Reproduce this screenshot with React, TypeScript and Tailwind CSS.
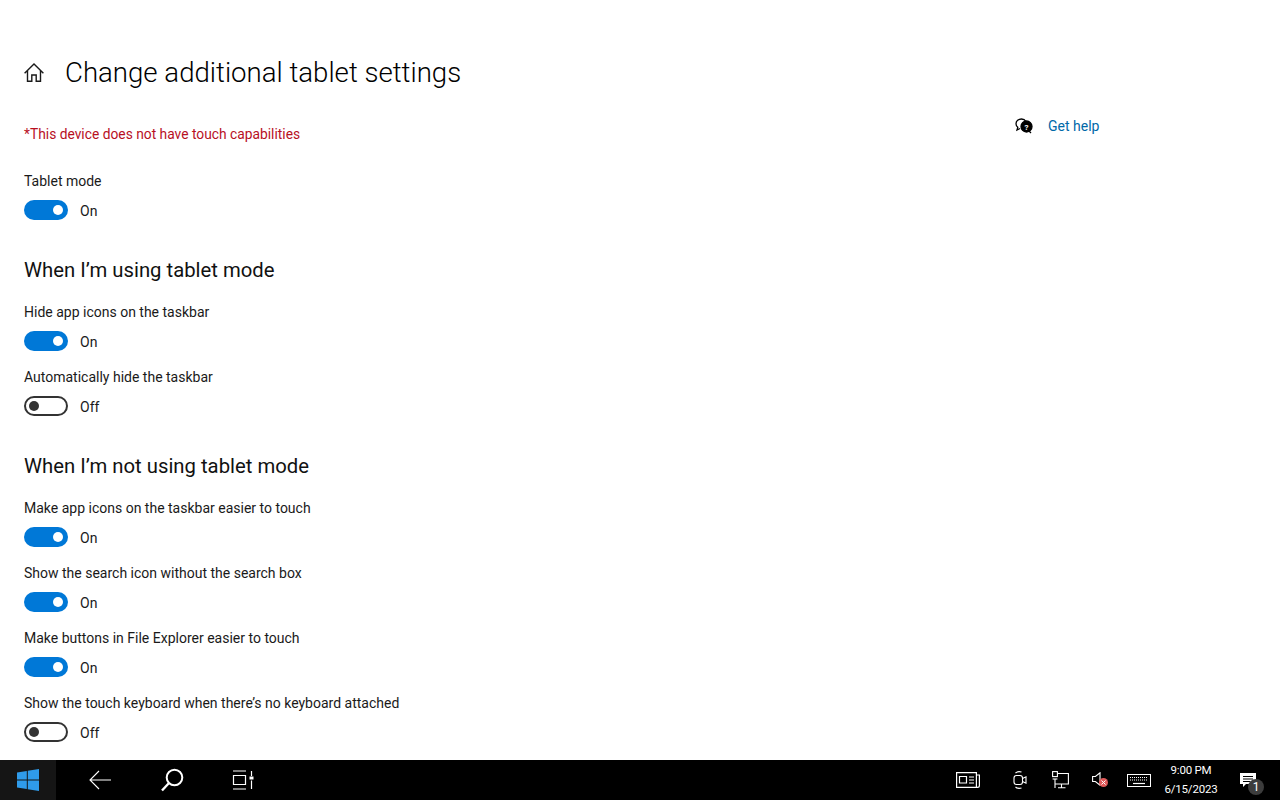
import React from 'react';

function Toggle({ on, label }: { on: boolean; label: string }) {
  return (
    <div className="flex items-center h-5 mt-[9px]">
      {on ? (
        <div className="w-11 h-5 rounded-full bg-[#0078d7] flex items-center justify-end pr-[5px]">
          <div className="w-[10px] h-[10px] rounded-full bg-white" />
        </div>
      ) : (
        <div className="w-11 h-5 rounded-full border-2 border-[#333333] flex items-center pl-[3px]">
          <div className="w-[10px] h-[10px] rounded-full bg-[#333333]" />
        </div>
      )}
      <span className="ml-3 text-[14px] text-[#1a1a1a] translate-y-[1px]">{label}</span>
    </div>
  );
}

function Setting({ title, on, className }: { title: string; on: boolean; className?: string }) {
  return (
    <div className={className}>
      <div className="h-5 leading-5 text-[14px] text-[#1a1a1a]">{title}</div>
      <Toggle on={on} label={on ? 'On' : 'Off'} />
    </div>
  );
}

function Heading({ children, className }: { children: React.ReactNode; className?: string }) {
  return <h2 className={`h-7 leading-7 text-[20.3px] text-[#111111] ${className}`}>{children}</h2>;
}

function HomeIcon() {
  return (
    <svg width="20" height="19" viewBox="0 0 20 19" fill="none" stroke="#1a1a1a" strokeWidth="1.4">
      <path d="M.6 10.200 10 1l9.400 9.200M3.500 7.500v10.800h4.300v-6.300h4.400v6.300h4.300V7.500" />
    </svg>
  );
}

function WindowsLogo() {
  return (
    <svg width="22" height="22" viewBox="0 0 22 22" fill="#2f9bea">
      <path d="M0 3.400 9.800 2v8.500H0zM10.800 1.800 22 0v10.500H10.800zM0 11.500h9.800V20L0 18.600zM10.800 11.500H22V22l-11.200-1.800z" />
    </svg>
  );
}

function BackIcon() {
  return (
    <svg width="22" height="20" viewBox="0 0 22 20" fill="none" stroke="white" strokeWidth="1.1">
      <path d="M22 10H1M10 1l-9 9 9 9" />
    </svg>
  );
}

function SearchIcon() {
  return (
    <svg width="24" height="24" viewBox="0 0 24 24" fill="none" stroke="white" strokeWidth="2">
      <circle cx="14.500" cy="9.500" r="7.800" />
      <path d="M9 15 2 22.500" strokeWidth="2.400" />
    </svg>
  );
}

function TaskViewIcon() {
  return (
    <svg width="22" height="20" viewBox="0 0 22 20" fill="none" stroke="white" strokeWidth="1.2">
      <path d="M1 1h13M1 19h13M1.500 5.500h12v9h-12z" />
      <path d="M19.500 1v5M19.500 10.500V19" />
      <rect x="17.500" y="6.500" width="4" height="3" fill="white" stroke="none" />
    </svg>
  );
}

function NewsIcon() {
  return (
    <svg width="24" height="16" viewBox="0 0 24 16" fill="none" stroke="white" strokeWidth="1.2">
      <path d="M.6.600h19.800v14.800H.6zM20.400 3h3v10.500a1.900 1.900 0 0 1-1.900 1.900h-1.100" />
      <path d="M3.500 4.500h7v6.500h-7zM13 5h5M13 8h5M13 11h5" />
    </svg>
  );
}

function MeetIcon() {
  return (
    <svg width="14" height="20" viewBox="0 0 14 20" fill="none" stroke="white" strokeWidth="1.1">
      <rect x="1" y="5.500" width="8.500" height="9" rx="2.500" />
      <path d="M9.500 8.500 13 6.800v6.400l-3.500-1.700M2.500 3Q5 .8 8.500 2M2.500 17q2.500 2.200 6 1" />
    </svg>
  );
}

function NetworkIcon() {
  return (
    <svg width="17" height="18" viewBox="0 0 17 18" fill="none" stroke="white" strokeWidth="1.1">
      <path d="M5 2.500h11.400v10.500H3M9.500 13v3.500M6 16.800h7.500M3 8v9" />
      <rect x=".6" y=".6" width="4.800" height="5" fill="black" />
      <path d="M.6 8h4.800" />
    </svg>
  );
}

function VolumeMutedIcon() {
  return (
    <div className="relative w-[16px] h-[16px]">
      <svg width="9" height="14" viewBox="0 0 9 14" fill="none" stroke="white" strokeWidth="1.1">
        <path d="M.6 4.500h2.800L8 .8v12.400L3.400 9.500H.6z" />
      </svg>
      <div className="absolute left-[7px] top-[6px] w-[9px] h-[9px] rounded-full bg-[#e05a5a] flex items-center justify-center">
        <svg width="5" height="5" viewBox="0 0 5 5" stroke="white" strokeWidth="1">
          <path d="M.5.500l4 4M4.500.500l-4 4" />
        </svg>
      </div>
    </div>
  );
}

function KeyboardIcon() {
  return (
    <svg width="24" height="13" viewBox="0 0 24 13" fill="none" stroke="white" strokeWidth="1">
      <rect x=".5" y=".5" width="23" height="12" />
      <path d="M3 3.500h18M3 6h18" strokeDasharray="1 1" />
      <path d="M6 9.500h12" strokeWidth="1.200" />
    </svg>
  );
}

function NotificationIcon() {
  return (
    <div className="relative w-6 h-6">
      <svg width="16" height="16" viewBox="0 0 16 16" className="absolute left-0 top-[4px]">
        <path d="M0 1h16v11H6l-3 3v-3H0z" fill="white" />
        <path d="M3 4.500h10M3 7h10M3 9.500h7" stroke="black" strokeWidth="1" />
      </svg>
      <div className="absolute left-[8px] top-[11px] w-4 h-4 rounded-full bg-[#3c3c3c] text-white text-[12px] leading-4 text-center">1</div>
    </div>
  );
}

export default function App() {
  return (
    <div className="w-[1280px] h-[800px] flex flex-col bg-white font-['Roboto','Noto_Sans',sans-serif] overflow-hidden">
      <main className="flex-1 pl-6 pt-[52px] flex">
        <div className="w-[992px]">
          <div className="flex items-center h-10">
            <HomeIcon />
            <h1 className="ml-[21px] text-[27.600px] font-light text-black translate-y-[1px]">Change additional tablet settings</h1>
          </div>
          <p className="mt-[32px] h-5 leading-5 text-[13.800px] text-[#b8101f]">*This device does not have touch capabilities</p>
          <Setting title="Tablet mode" on className="mt-[27px]" />
          <Heading className="mt-[36px]">When I’m using tablet mode</Heading>
          <Setting title="Hide app icons on the taskbar" on className="mt-[18px]" />
          <Setting title="Automatically hide the taskbar" on={false} className="mt-4" />
          <Heading className="mt-[36px]">When I’m not using tablet mode</Heading>
          <Setting title="Make app icons on the taskbar easier to touch" on className="mt-[18px]" />
          <Setting title="Show the search icon without the search box" on className="mt-4" />
          <Setting title="Make buttons in File Explorer easier to touch" on className="mt-4" />
          <Setting title="Show the touch keyboard when there’s no keyboard attached" on={false} className="mt-4" />
        </div>
        <div className="pt-[64px]">
          <div className="flex items-center h-5">
            <svg width="18" height="16" viewBox="0 0 18 16" fill="none" stroke="black" strokeWidth="1.3" className="-translate-x-[1px]">
              <path d="M11 3.500C10 1.800 8.500 1 6.500 1 3.500 1 1 3 1 5.800c0 1.500.7 2.700 1.800 3.500L2 12l3-1.500" />
              <circle cx="11.500" cy="8.500" r="5.500" fill="black" />
              <path d="M14 13l2 2" />
              <text x="11.500" y="11.500" fontSize="8" fontWeight="700" fill="white" stroke="none" textAnchor="middle">?</text>
            </svg>
            <a className="ml-[14px] text-[14px] text-[#0068a8]">Get help</a>
          </div>
        </div>
      </main>
      <footer className="h-10 bg-black flex items-center text-white">
        <div className="w-[56px] h-10 bg-[#151515] flex items-center justify-center">
          <WindowsLogo />
        </div>
        <div className="w-[88px] flex justify-center">
          <BackIcon />
        </div>
        <div className="w-[56px] flex justify-center">
          <SearchIcon />
        </div>
        <div className="ml-[22px] w-[44px] flex justify-center -translate-x-[1px]">
          <TaskViewIcon />
        </div>
        <div className="ml-auto flex items-center">
          <div className="w-6 flex justify-center"><NewsIcon /></div>
          <div className="ml-[33px] w-[14px] flex justify-center"><MeetIcon /></div>
          <div className="ml-[25px]"><NetworkIcon /></div>
          <div className="ml-[23px]"><VolumeMutedIcon /></div>
          <div className="ml-[19px]"><KeyboardIcon /></div>
          <div className="ml-[8px] w-[64px] text-center text-[11.500px] tracking-[-0.2px] leading-[19px]">
            <div>9:00 PM</div>
            <div>6/15/2023</div>
          </div>
          <div className="ml-[17px] mr-[16px]"><NotificationIcon /></div>
        </div>
      </footer>
    </div>
  );
}
